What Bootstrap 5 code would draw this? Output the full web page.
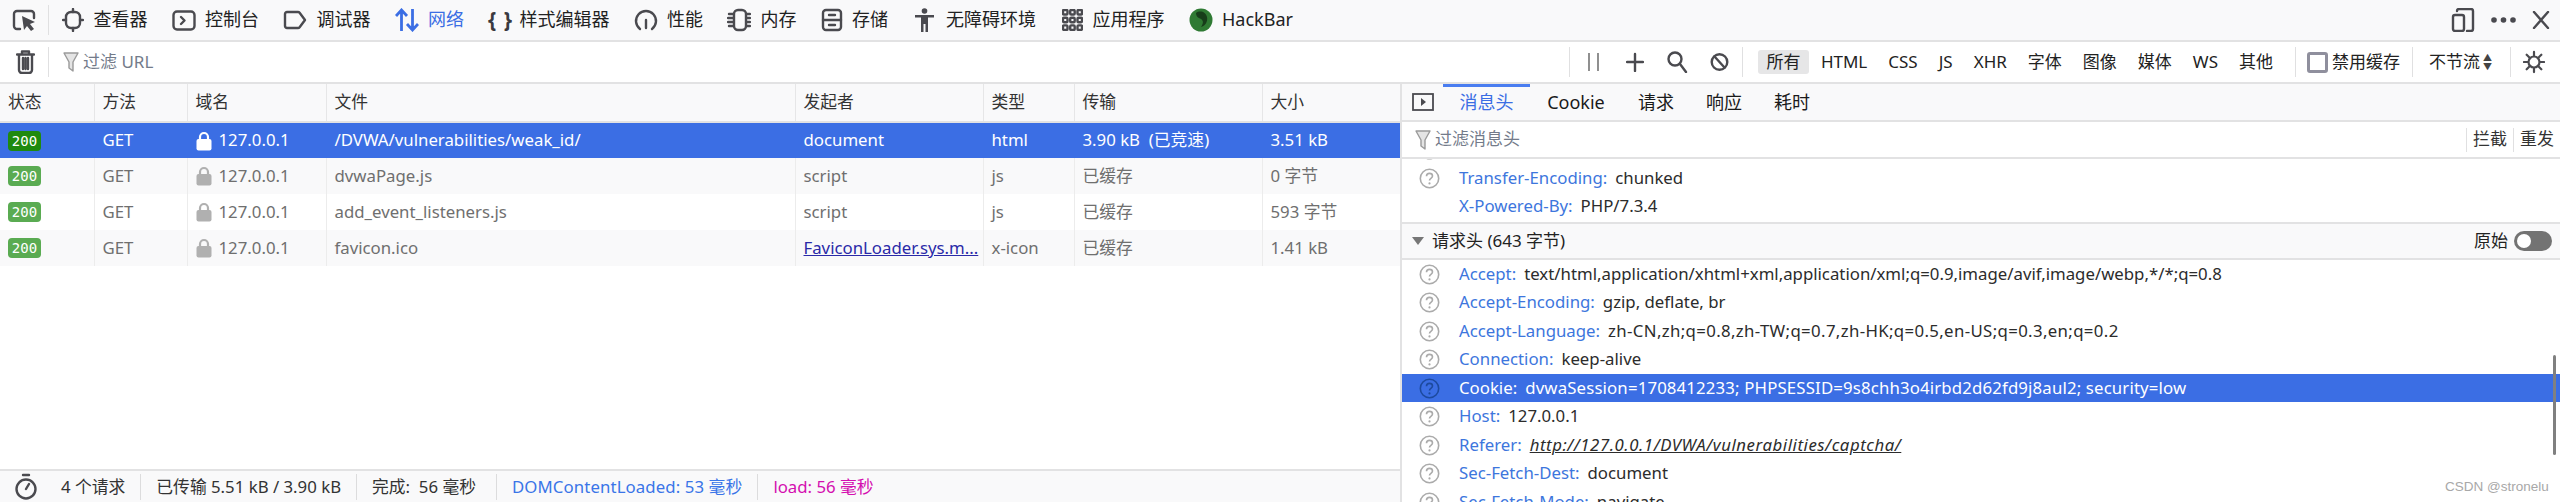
<!DOCTYPE html>
<html lang="zh-CN">
<head>
    <meta charset="utf-8">
    <title>网络</title>
    <link href="https://cdn.jsdelivr.net/npm/bootstrap@5.3.3/dist/css/bootstrap.min.css" rel="stylesheet">
    <style>
        html, body { height: 502px; overflow: hidden; }
        body {
            font-family: "Noto Sans", "Noto Sans CJK SC", sans-serif;
            font-size: 16px;
            color: #222;
            background: #fff;
            line-height: 1.2;
        }
        .devtools { width: 2560px; height: 502px; position: relative; }
        svg { display: block; flex: none; }
        .ink { fill: none; stroke: #4a4a4f; stroke-width: 2.4; stroke-linecap: round; stroke-linejoin: round; }
        .ink-fill { fill: #4a4a4f; }
        .sprites { position: absolute; }

        .top-bar { height: 42px; background: #f9f9fa; border-bottom: 2px solid #e2e2e3; padding-left: 12px; padding-right: 10px; }
        .pick-wrap { width: 37px; height: 30px; border-right: 1px solid #e0e0e1; margin-right: 13px; }
        .tool-tab { font-size: 18px; gap: 9.5px; margin-right: 24px; color: #222; white-space: nowrap; }
        .tool-tab.is-on { color: #3b6ee4; }
        .tool-tab.a11y-tab { gap: 11px; margin-left: 2px; }
        .tool-tab.apps-tab { margin-left: 2px; }
        .brace-icon { width: 22px; font-weight: 700; font-size: 21px; letter-spacing: 1px; text-align: center; color: #3a3a3f; }

        .filter-bar { height: 42px; border-bottom: 2px solid #e2e2e3; font-size: 17px; padding-left: 16px; }
        .trash-wrap { width: 33px; height: 30px; border-right: 1px solid #e0e0e1; margin-right: 14px; }
        .hint-text { color: #737b8a; }
        .vline { width: 1px; height: 30px; background: #e0e0e1; flex: none; }
        .btn-plus { margin-left: 24px; }
        .btn-search { margin-left: 23px; }
        .btn-block { margin-left: 22px; }
        .gap-13 { margin-left: 13px; }
        .gap-22 { margin-left: 22px; }
        .gap-12 { margin-left: 12px; }
        .gap-18 { margin-left: 18px; }
        .kind-on { background: #e6e6e7; border-radius: 3px; width: 51px; height: 24px; line-height: 24px; text-align: center; margin: 0 12px 0 15px; }
        .kinds { gap: 21px; }
        .fake-check { width: 21px; height: 21px; border: 3px solid #8f8f9d; border-radius: 3px; background: #fff; margin: 0 4px 0 11px; }
        .updown { font-size: 9px; line-height: 9px; margin-left: 3px; color: #444; }
        .gear-icon { margin: 0 15px 0 12px; }

        .net-left { width: 1400px; height: 418px; }
        .net-scroll { flex: 1 1 auto; }
        .net-table { table-layout: fixed; width: 1400px; border-collapse: collapse; font-size: 16.8px; }
        .net-table th { height: 38px; font-weight: 400; color: #333; background: #f9f9fa; border-bottom: 2px solid #e2e2e3; border-right: 1px solid #e6e6e7; padding: 0 0 0 8px; }
        .net-table td { height: 36px; color: #6f6f6f; border-right: 1px solid #ececec; padding: 0 0 0 8px; white-space: nowrap; overflow: hidden; }
        .net-table tr:nth-child(even) td { background: #f9f9fa; }
        .net-table tr.row-on td { background: #3b6ee4; color: #fff; border-right-color: #3b6ee4; }
        .net-table th:nth-child(1) { width: 94px; }
        .net-table th:nth-child(2) { width: 93px; }
        .net-table th:nth-child(3) { width: 139px; }
        .net-table th:nth-child(4) { width: 469px; }
        .net-table th:nth-child(5) { width: 188px; }
        .net-table th:nth-child(6) { width: 91px; }
        .net-table th:nth-child(7) { width: 188px; }
        .net-table th:nth-child(8) { width: 138px; }
        .code-chip { display: block; width: 33px; height: 20px; line-height: 20px; border-radius: 4px; text-align: center; color: #fff; background: #5aab52; font-family: "DejaVu Sans Mono", monospace; font-size: 14px; }
        .row-on .code-chip { background: #1f8a0e; }
        .lock-name { gap: 7px; }
        .loader-link { color: #2a2aa8; text-decoration: underline; }

        .status-strip { height: 33px; background: #f9f9fa; border-top: 2px solid #e2e2e3; font-size: 16.8px; color: #333; padding-left: 14px; }
        .status-cell { padding: 0 15px; border-right: 1px solid #dcdcdd; height: 26px; line-height: 26px; white-space: nowrap; }
        .status-cell:last-child { border-right: 0; }
        .done-time { padding-right: 20px; }
        .dcl-time { color: #3a75e8; letter-spacing: .1px; }
        .load-time { color: #d40fb0; }

        .panel-right { width: 1160px; height: 418px; border-left: 2px solid #e2e2e3; overflow: hidden; }
        .panel-tabs { height: 38px; background: #f9f9fa; border-bottom: 2px solid #e2e2e3; font-size: 18px; padding-left: 10px; }
        .side-toggle { margin-right: 9px; }
        .panel-tab { height: 36px; line-height: 31px; padding: 0 16px; border-top: 3px solid transparent; white-space: nowrap; color: #1a1a1a; }
        .panel-tab.is-on { color: #3b6ee4; border-top-color: #4a7df0; width: 87px; padding: 0; text-align: center; }
        .panel-tab.cookie-tab { width: 92px; text-align: center; padding: 0; }
        .panel-filter { height: 37px; border-bottom: 2px solid #e2e2e3; font-size: 17px; padding-left: 13px; }
        .panel-filter .vline { height: 24px; }
        .resend-link { padding: 0 6px; color: #333; white-space: nowrap; }
        .head-scroll { height: 343px; overflow: hidden; font-size: 16.8px; }
        .head-list { margin-top: -23.75px; }
        .head-row { height: 28.5px; padding-left: 17px; white-space: nowrap; }
        .head-row .q-slot { width: 21px; margin-right: 19px; color: #ababab; }
        .head-key { color: #3d76dd; margin-right: 8px; }
        .head-val { color: #2c2c2c; }
        .val-wide { letter-spacing: .36px; }
        .val-cookie { letter-spacing: .15px; }
        .head-row.row-on { background: #3b6ee4; }
        .head-row.row-on .q-slot { color: #1d4a9e; }
        .head-row.row-on .head-key, .head-row.row-on .head-val { color: #fff; }
        .link-val { font-style: italic; text-decoration: underline; letter-spacing: .55px; }
        .head-group { height: 38px; background: #f9f9fa; border-top: 2px solid #e2e2e3; border-bottom: 2px solid #e2e2e3; margin-top: 1px; padding: 0 8px 0 10px; font-size: 17px; }
        .tri-down { width: 0; height: 0; border-left: 6px solid transparent; border-right: 6px solid transparent; border-top: 8px solid #777; margin-right: 8px; }
        .raw-switch { width: 38px; height: 20px; background: #737373; border-radius: 10px; margin-left: 6px; padding: 3px; }
        .raw-knob { width: 14px; height: 14px; background: #fff; border-radius: 50%; }
        .scroll-thumb { position: absolute; left: 2553px; top: 355px; width: 3px; height: 100px; background: #808080; border-radius: 2px; }
        .stamp { position: absolute; left: 2445px; top: 479px; font-family: "Liberation Sans", sans-serif; font-size: 13.5px; color: #a8a8a8; }
    </style>
</head>
<body>
<svg width="0" height="0" class="sprites">
    <symbol id="q-mark" viewBox="0 0 21 21">
        <circle cx="10.5" cy="10.5" r="9.2" fill="none" stroke="currentColor" stroke-width="1.6"/>
        <path d="M7.5 8.2c0-1.8 1.3-2.8 3-2.8s3 1 3 2.6c0 2.3-3 2.3-3 4.4" fill="none" stroke="currentColor" stroke-width="1.6"/>
        <circle cx="10.5" cy="15.4" r="1.1" fill="currentColor"/>
    </symbol>
    <symbol id="lock" viewBox="0 0 16 20">
        <path d="M4 8V6a4 4 0 0 1 8 0v2" fill="none" stroke="currentColor" stroke-width="2.2"/>
        <rect x="0.5" y="8" width="15" height="11.5" rx="2" fill="currentColor"/>
    </symbol>
    <symbol id="funnel" viewBox="0 0 16 22">
        <path d="M1 2h14l-5 9v9l-4-3v-6z" fill="#e4e4e4" stroke="#9a9a9a" stroke-width="1.4" stroke-linejoin="round"/>
    </symbol>
</svg>

<div class="devtools">
    <div class="top-bar d-flex align-items-center">
        <div class="pick-wrap d-flex align-items-center">
            <svg width="24" height="22" viewBox="0 0 24 22"><path class="ink" stroke-width="3" d="M8 20H5a3 3 0 0 1-3-3V5a3 3 0 0 1 3-3h14a3 3 0 0 1 3 3v4"/><path class="ink-fill" d="M10 7l13 6-5 2 4 5-3 2-4-5-3 4z"/></svg>
        </div>
        <div class="tool-tab d-flex align-items-center">
            <svg width="22" height="24" viewBox="0 0 22 24"><rect class="ink" stroke-width="3" x="4" y="4" width="14" height="16" rx="5"/><path class="ink" stroke-width="1.6" d="M11 1v3M11 20v3M1 12h3M18 12h3"/></svg>查看器
        </div>
        <div class="tool-tab d-flex align-items-center">
            <svg width="24" height="21" viewBox="0 0 24 21"><rect class="ink" stroke-width="3" x="1.5" y="1.5" width="21" height="18" rx="3.5"/><path class="ink" stroke-width="1.8" d="M9 7l3.5 3.500L9 14"/></svg>控制台
        </div>
        <div class="tool-tab d-flex align-items-center">
            <svg width="24" height="22" viewBox="0 0 24 22"><path class="ink" stroke-width="3" d="M4 3h11a2 2 0 0 1 1.600.8L22 11l-5.400 7.200A2 2 0 0 1 15 19H4a2 2 0 0 1-2-2V5a2 2 0 0 1 2-2z"/></svg>调试器
        </div>
        <div class="tool-tab is-on d-flex align-items-center">
            <svg width="24" height="24" viewBox="0 0 24 24"><path d="M6.500 23V2M1 8l5.500-6L12 8M17.500 1v21M12 16l5.500 6L23 16" fill="none" stroke="#3b6ee4" stroke-width="2.8"/></svg>网络
        </div>
        <div class="tool-tab d-flex align-items-center">
            <span class="brace-icon">{ }</span>样式编辑器
        </div>
        <div class="tool-tab d-flex align-items-center">
            <svg width="24" height="24" viewBox="0 0 24 24"><path class="ink" stroke-width="3" d="M6 21a10 10 0 1 1 12 0"/><path class="ink" stroke-width="2.4" d="M12 12v8"/></svg>性能
        </div>
        <div class="tool-tab d-flex align-items-center">
            <svg width="24" height="24" viewBox="0 0 24 24"><rect class="ink" x="7" y="2" width="12" height="20" rx="4"/><path class="ink" stroke-width="1.6" d="M2 6h4M1 10h5M1 14h5M2 18h4M20 6h3M20 10h3M20 14h3M20 18h3"/></svg>内存
        </div>
        <div class="tool-tab d-flex align-items-center">
            <svg width="22" height="24" viewBox="0 0 22 24"><rect class="ink" stroke-width="3" x="2" y="2" width="18" height="20" rx="3"/><path class="ink" stroke-width="2" d="M2 12h18M8 7h6M8 17h6"/></svg>存储
        </div>
        <div class="tool-tab a11y-tab d-flex align-items-center">
            <svg width="21" height="24" viewBox="0 0 21 24"><circle class="ink-fill" cx="10.5" cy="3" r="2.8"/><path class="ink-fill" d="M1 7h19v2.500h-6V24h-2.500v-8h-2v8H7V9.500H1z"/></svg>无障碍环境
        </div>
        <div class="tool-tab apps-tab d-flex align-items-center">
            <svg width="21" height="22" viewBox="0 0 21 22"><g class="ink" stroke-width="1.6"><rect x="1" y="1" width="4.5" height="4.5" rx="1"/><rect x="8.2" y="1" width="4.5" height="4.5" rx="1"/><rect x="15.5" y="1" width="4.5" height="4.5" rx="1"/><rect x="1" y="8.7" width="4.5" height="4.5" rx="1"/><rect x="8.2" y="8.7" width="4.5" height="4.5" rx="1"/><rect x="15.5" y="8.7" width="4.5" height="4.5" rx="1"/><rect x="1" y="16.4" width="4.5" height="4.5" rx="1"/><rect x="8.2" y="16.4" width="4.5" height="4.5" rx="1"/><rect x="15.5" y="16.4" width="4.5" height="4.5" rx="1"/></g></svg>应用程序
        </div>
        <div class="tool-tab d-flex align-items-center">
            <svg width="24" height="24" viewBox="0 0 24 24"><circle cx="12" cy="12" r="11.5" fill="#2f7a33"/><path d="M7 5c4-3 10-1 11 4s-2 9-6 10c2-3 3-6 0-8-2-1-5-2-5-6z" fill="#173d1a"/></svg>HackBar
        </div>
        <div class="ms-auto d-flex align-items-center">
            <svg width="24" height="24" viewBox="0 0 24 24" class="me-3"><rect class="ink" x="2" y="7" width="11" height="16" rx="2"/><path class="ink" d="M6 3a2 2 0 0 1 2-2h12a2 2 0 0 1 2 2v18a2 2 0 0 1-2 2h-4"/></svg>
            <svg width="25" height="6" viewBox="0 0 25 6" class="me-3"><circle class="ink-fill" cx="3" cy="3" r="2.8"/><circle class="ink-fill" cx="12.5" cy="3" r="2.8"/><circle class="ink-fill" cx="22" cy="3" r="2.8"/></svg>
            <svg width="18" height="18" viewBox="0 0 18 18"><path class="ink" stroke-width="2" d="M2 1l14 16M16 1L2 17"/></svg>
        </div>
    </div>

    <div class="filter-bar d-flex align-items-center">
        <div class="trash-wrap d-flex align-items-center">
            <svg width="19" height="24" viewBox="0 0 19 24"><path class="ink" stroke-width="2.6" d="M1 4.500h17M6 4V1.500h7V4M3 5v15a3 3 0 0 0 3 3h7a3 3 0 0 0 3-3V5"/><path class="ink" stroke-width="1.4" d="M7 8v11M9.500 8v11M12 8v11"/></svg>
        </div>
        <svg width="16" height="22" class="me-1"><use href="#funnel"/></svg>
        <span class="hint-text">过滤 URL</span>
        <div class="ms-auto d-flex align-items-center">
            <div class="vline"></div>
            <svg width="16" height="20" viewBox="0 0 16 20" class="ms-3"><path d="M3 1v18M12 1v18" stroke="#555" stroke-width="1.3"/></svg>
            <svg width="18" height="20" viewBox="0 0 18 20" class="btn-plus"><path class="ink" stroke-width="2.6" stroke-linecap="butt" d="M9 2v17M1 10h16"/></svg>
            <svg width="21" height="22" viewBox="0 0 21 22" class="btn-search"><circle class="ink" cx="8" cy="8" r="6.5"/><path class="ink" stroke-width="3" d="M13 13l6 8"/></svg>
            <svg width="19" height="20" viewBox="0 0 19 20" class="btn-block"><circle class="ink" stroke-width="3.2" cx="9.5" cy="10" r="7.8"/><path class="ink" stroke-width="3" d="M4.500 4.500l10 11"/></svg>
            <div class="vline gap-13"></div>
            <div class="kind-on">所有</div>
            <div class="kinds d-flex">
                <span>HTML</span><span>CSS</span><span>JS</span><span>XHR</span><span>字体</span><span>图像</span><span>媒体</span><span>WS</span><span>其他</span>
            </div>
            <div class="vline gap-22"></div>
            <div class="fake-check"></div>
            <span>禁用缓存</span>
            <div class="vline gap-12"></div>
            <span class="ms-3 text-nowrap">不节流</span>
            <div class="updown text-center">▲<br>▼</div>
            <div class="vline gap-18"></div>
            <svg width="22" height="24" viewBox="0 0 24 24" class="gear-icon"><circle class="ink" stroke-width="3.6" cx="12" cy="12" r="6"/><path class="ink" stroke-width="3" d="M12 1v4M12 19v4M1 12h4M19 12h4M4 4l3 3M17 17l3 3M4 20l3-3M17 7l3-3"/></svg>
        </div>
    </div>

    <div class="d-flex">
        <div class="net-left d-flex flex-column">
            <div class="net-scroll">
                <table class="net-table">
                    <thead>
                        <tr><th>状态</th><th>方法</th><th>域名</th><th>文件</th><th>发起者</th><th>类型</th><th>传输</th><th>大小</th></tr>
                    </thead>
                    <tbody>
                        <tr class="row-on">
                            <td><span class="code-chip">200</span></td><td>GET</td>
                            <td><div class="lock-name d-flex align-items-center"><svg width="16" height="20" color="#fff"><use href="#lock"/></svg>127.0.0.1</div></td>
                            <td>/DVWA/vulnerabilities/weak_id/</td><td>document</td><td>html</td><td>3.90 kB&nbsp; (已竞速)</td><td>3.51 kB</td>
                        </tr>
                        <tr>
                            <td><span class="code-chip">200</span></td><td>GET</td>
                            <td><div class="lock-name d-flex align-items-center"><svg width="16" height="20" color="#b0b0b0"><use href="#lock"/></svg>127.0.0.1</div></td>
                            <td>dvwaPage.js</td><td>script</td><td>js</td><td>已缓存</td><td>0 字节</td>
                        </tr>
                        <tr>
                            <td><span class="code-chip">200</span></td><td>GET</td>
                            <td><div class="lock-name d-flex align-items-center"><svg width="16" height="20" color="#b0b0b0"><use href="#lock"/></svg>127.0.0.1</div></td>
                            <td>add_event_listeners.js</td><td>script</td><td>js</td><td>已缓存</td><td>593 字节</td>
                        </tr>
                        <tr>
                            <td><span class="code-chip">200</span></td><td>GET</td>
                            <td><div class="lock-name d-flex align-items-center"><svg width="16" height="20" color="#b0b0b0"><use href="#lock"/></svg>127.0.0.1</div></td>
                            <td>favicon.ico</td><td><span class="loader-link">FaviconLoader.sys.m...</span></td><td>x-icon</td><td>已缓存</td><td>1.41 kB</td>
                        </tr>
                    </tbody>
                </table>
            </div>
            <div class="status-strip d-flex align-items-center">
                <svg width="24" height="28" viewBox="0 0 24 28" class="me-2"><path class="ink" stroke-width="2" d="M9 2h6"/><circle class="ink" stroke-width="3" cx="12" cy="16" r="9.5"/><path class="ink" stroke-width="2" d="M12 16l3-5"/></svg>
                <div class="status-cell">4 个请求</div>
                <div class="status-cell">已传输 5.51 kB / 3.90 kB</div>
                <div class="status-cell done-time">完成:&nbsp; 56 毫秒</div>
                <div class="status-cell dcl-time">DOMContentLoaded: 53 毫秒</div>
                <div class="status-cell load-time">load: 56 毫秒</div>
            </div>
        </div>

        <div class="panel-right">
            <div class="panel-tabs d-flex align-items-center">
                <svg width="22" height="18" viewBox="0 0 22 18" class="side-toggle"><rect x="1" y="1" width="20" height="16" fill="none" stroke="#4a4a4f" stroke-width="1.8"/><path d="M9 5l5 4-5 4z" fill="#4a4a4f"/></svg>
                <div class="panel-tab is-on">消息头</div>
                <div class="panel-tab cookie-tab">Cookie</div>
                <div class="panel-tab">请求</div>
                <div class="panel-tab">响应</div>
                <div class="panel-tab">耗时</div>
            </div>
            <div class="panel-filter d-flex align-items-center">
                <svg width="16" height="22" class="me-1"><use href="#funnel"/></svg>
                <span class="hint-text">过滤消息头</span>
                <div class="ms-auto d-flex align-items-center">
                    <div class="vline"></div><span class="resend-link">拦截</span>
                    <div class="vline"></div><span class="resend-link">重发</span>
                </div>
            </div>
            <div class="head-scroll">
                <div class="head-list">
                    <div class="head-row d-flex align-items-center"><div class="q-slot"><svg width="21" height="21"><use href="#q-mark"/></svg></div><span class="head-key">Server:</span><span class="head-val">Apache/2.4.39 (Win64) OpenSSL/1.1.1b mod_fcgid/2.3.9a</span></div>
                    <div class="head-row d-flex align-items-center"><div class="q-slot"><svg width="21" height="21"><use href="#q-mark"/></svg></div><span class="head-key">Transfer-Encoding:</span><span class="head-val">chunked</span></div>
                    <div class="head-row d-flex align-items-center"><div class="q-slot"></div><span class="head-key">X-Powered-By:</span><span class="head-val">PHP/7.3.4</span></div>
                    <div class="head-group d-flex align-items-center">
                        <div class="tri-down"></div><span>请求头 (643 字节)</span>
                        <span class="ms-auto">原始</span>
                        <div class="raw-switch"><div class="raw-knob"></div></div>
                    </div>
                    <div class="head-row d-flex align-items-center"><div class="q-slot"><svg width="21" height="21"><use href="#q-mark"/></svg></div><span class="head-key">Accept:</span><span class="head-val">text/html,application/xhtml+xml,application/xml;q=0.9,image/avif,image/webp,*/*;q=0.8</span></div>
                    <div class="head-row d-flex align-items-center"><div class="q-slot"><svg width="21" height="21"><use href="#q-mark"/></svg></div><span class="head-key">Accept-Encoding:</span><span class="head-val">gzip, deflate, br</span></div>
                    <div class="head-row d-flex align-items-center"><div class="q-slot"><svg width="21" height="21"><use href="#q-mark"/></svg></div><span class="head-key">Accept-Language:</span><span class="head-val val-wide">zh-CN,zh;q=0.8,zh-TW;q=0.7,zh-HK;q=0.5,en-US;q=0.3,en;q=0.2</span></div>
                    <div class="head-row d-flex align-items-center"><div class="q-slot"><svg width="21" height="21"><use href="#q-mark"/></svg></div><span class="head-key">Connection:</span><span class="head-val">keep-alive</span></div>
                    <div class="head-row row-on d-flex align-items-center"><div class="q-slot"><svg width="21" height="21"><use href="#q-mark"/></svg></div><span class="head-key">Cookie:</span><span class="head-val val-cookie">dvwaSession=1708412233; PHPSESSID=9s8chh3o4irbd2d62fd9j8aul2; security=low</span></div>
                    <div class="head-row d-flex align-items-center"><div class="q-slot"><svg width="21" height="21"><use href="#q-mark"/></svg></div><span class="head-key">Host:</span><span class="head-val">127.0.0.1</span></div>
                    <div class="head-row d-flex align-items-center"><div class="q-slot"><svg width="21" height="21"><use href="#q-mark"/></svg></div><span class="head-key">Referer:</span><span class="head-val link-val">http://127.0.0.1/DVWA/vulnerabilities/captcha/</span></div>
                    <div class="head-row d-flex align-items-center"><div class="q-slot"><svg width="21" height="21"><use href="#q-mark"/></svg></div><span class="head-key">Sec-Fetch-Dest:</span><span class="head-val">document</span></div>
                    <div class="head-row d-flex align-items-center"><div class="q-slot"><svg width="21" height="21"><use href="#q-mark"/></svg></div><span class="head-key">Sec-Fetch-Mode:</span><span class="head-val">navigate</span></div>
                </div>
            </div>
        </div>
    </div>
    <div class="scroll-thumb"></div>
    <div class="stamp">CSDN @stronelu</div>
</div>
<script src="https://cdn.jsdelivr.net/npm/bootstrap@5.3.3/dist/js/bootstrap.bundle.min.js"></script>
</body>
</html>
